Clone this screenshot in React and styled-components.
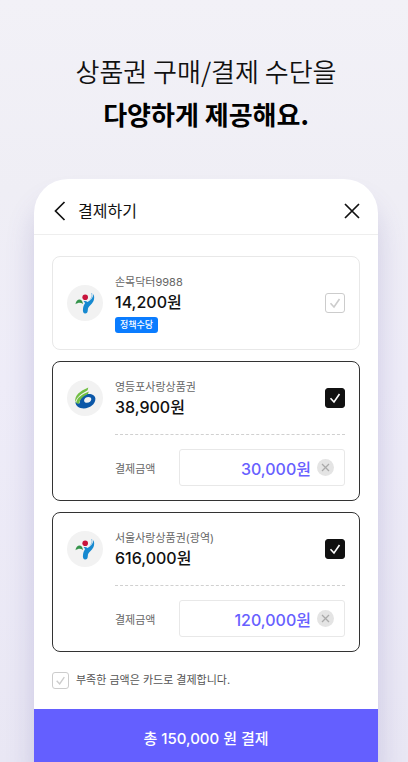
import React, { useState } from 'react';
import styled, { createGlobalStyle } from 'styled-components';

const GlobalStyle = createGlobalStyle`
  * {
    box-sizing: border-box;
  }
  body {
    margin: 0;
    color: #111;
    font-family: Inter, 'Noto Sans CJK KR', sans-serif;
  }
  button,
  input {
    margin: 0;
    padding: 0;
    border: 0;
    background: none;
    color: inherit;
    font-family: inherit;
  }
  button {
    cursor: pointer;
  }
`;

const Page = styled.main`
  display: flex;
  flex-direction: column;
  min-height: 100vh;
  padding: 49px 30px 0 34px;
  background: linear-gradient(#f2f1f7, #efeef5 25%, #eeecf8 50%, #e9e7f4);
`;

const Headline = styled.h1`
  margin: 0 0 44px;
  font-family: 'Noto Sans CJK KR', sans-serif;
  font-size: 26px;
  font-weight: 350;
  line-height: 43px;
  text-align: center;
  strong {
    display: block;
    color: #000;
    font-weight: 700;
  }
`;

const Sheet = styled.section`
  display: flex;
  flex: 1;
  flex-direction: column;
  overflow: hidden;
  border-radius: 34px 34px 0 0;
  background: #fff;
  box-shadow: 0 24px 28px rgba(90, 80, 160, 0.22);
`;

const SheetHeader = styled.header`
  display: flex;
  align-items: center;
  gap: 8px;
  height: 56px;
  padding: 8px 16px 0;
  border-bottom: 1px solid #eee;
  h2 {
    flex: 1;
    margin: 0;
    font-size: 16px;
    font-weight: 400;
    line-height: 24px;
  }
`;

const IconButton = styled.button`
  display: grid;
  place-items: center;
  width: 20px;
  height: 24px;
`;

const List = styled.div`
  display: flex;
  flex: 1;
  flex-direction: column;
  gap: 11px;
  padding: 21px 18px 16px;
`;

const Card = styled.article`
  display: grid;
  grid-template-columns: 36px 1fr 20px;
  column-gap: 12px;
  align-items: center;
  padding: 14px;
  border: 1px solid ${({ $on }) => ($on ? '#333' : '#e8e8e8')};
  border-radius: 8px;
`;

const Emblem = styled.svg`
  width: 36px;
  height: 36px;
`;

const Info = styled.div`
  display: flex;
  flex-direction: column;
  align-items: flex-start;
  padding: 2px 0;
`;

const Name = styled.div`
  color: #666;
  font-size: 11px;
  line-height: 18px;
`;

const Balance = styled.div`
  font-size: 16px;
  font-weight: 500;
  line-height: 22px;
`;

const Badge = styled.span`
  margin-top: 4px;
  padding: 0 5px;
  border-radius: 3px;
  background: #0a7cff;
  color: #fff;
  font-size: 9px;
  font-weight: 500;
  line-height: 16px;
`;

const Payment = styled.div`
  display: grid;
  grid-column: 2 / -1;
  grid-template-columns: 48px minmax(0, 1fr);
  align-items: center;
  gap: 16px;
  margin-top: 14px;
  padding-top: 14px;
  border-top: 1px dashed #d0d0d0;
  label {
    color: #666;
    font-size: 11px;
    white-space: nowrap;
  }
`;

const AmountBox = styled.div`
  display: flex;
  align-items: center;
  gap: 6px;
  height: 37px;
  padding: 0 10px;
  border: 1px solid #e8e8e8;
  border-radius: 3px;
  input {
    flex: 1;
    min-width: 0;
    height: 24px;
    outline: none;
    color: #6760ff;
    font-size: 16px;
    font-weight: 500;
    text-align: right;
  }
`;

const ClearButton = styled.button`
  display: grid;
  place-items: center;
  width: 17px;
  height: 17px;
  border-radius: 50%;
  background: #e4e4e4;
`;

const CheckWrap = styled.span`
  display: grid;
  width: ${({ $size }) => $size}px;
  height: ${({ $size }) => $size}px;
  input,
  svg {
    grid-area: 1 / 1;
    width: 100%;
    height: 100%;
  }
  input {
    appearance: none;
    border: 1px solid #ccc;
    border-radius: 3px;
  }
  input:checked {
    border-color: #111;
    background: #111;
  }
  svg {
    color: #ccc;
    pointer-events: none;
  }
  input:checked + svg {
    color: #fff;
  }
`;

const CardOption = styled.label`
  display: flex;
  align-items: center;
  gap: 7px;
  margin-top: 8px;
  color: #555;
  font-size: 11px;
  line-height: 18px;
`;

const PayButton = styled.button`
  height: 53px;
  padding-top: 4px;
  background: #645fff;
  color: #fff;
  font-size: 15px;
  font-weight: 500;
`;

function Check({ size = 20, ...props }) {
  return (
    <CheckWrap $size={size}>
      <input type="checkbox" {...props} />
      <svg viewBox="0 0 20 20" fill="none" stroke="currentColor" strokeWidth="1.6">
        <path d="M5.5 10.2 9 14l5.5-8" />
      </svg>
    </CheckWrap>
  );
}

function SeoulEmblem() {
  return (
    <Emblem viewBox="0 0 36 36" aria-hidden="true">
      <circle cx="18" cy="18" r="18" fill="#f2f2f2" />
      <circle cx="18.2" cy="12.2" r="2.8" fill="#c8143c" />
      <path d="M8.500 19.200C9 13.800 15.200 12.400 16 19c-2.400-1.800-4.600-1.800-7.500.2Z" fill="#35944b" />
      <path
        d="M26.600 9c1.400 4.600.2 7.800-2.600 10.400-2.200 2-3.200 3.400-3.200 5.600 0 2.400-1 3.600-2.600 3.600-1.800 0-2.600-2-2.200-4.600.2-2.600 1-4.400 2-5.800-.4-1-.8-1.400-1.400-2 1.800-.4 3 0 3.800.8 3-1.600 5.600-3.800 6.200-8Z"
        fill="#1689d0"
      />
      <path d="M24.600 8c1 3 .2 5.600-2.200 7.400" fill="none" stroke="#8cc4e8" strokeWidth="1" />
    </Emblem>
  );
}

function YeongdeungpoEmblem() {
  return (
    <Emblem viewBox="0 0 36 36" aria-hidden="true">
      <circle cx="18" cy="18" r="18" fill="#f2f2f2" />
      <path
        fillRule="evenodd"
        d="M15.500 15.600c5.500-3 12.900-1.800 12.900 3.200 0 5.400-5.400 9.600-11.600 9.600-4.800 0-8.200-2.400-8.400-6.400 1.400 1 2.800 1.400 4.200 1.200.2-3 1-5.600 2.900-7.600Zm6 1.300c-2.600 0-4.400 1.700-4.400 3.500 0 1.500 1.200 2.300 2.800 2.300 2.500 0 4.400-1.700 4.400-3.500 0-1.500-1.200-2.300-2.800-2.300Z"
        fill="#0b57a8"
      />
      <path d="M21.300 7.400C13 11 7.200 15 8.300 22.400c1.400-5.400 5.600-8.400 12.300-12.200Z" fill="#72bf44" />
      <path d="M21.800 11.400C14.800 14.400 9.600 17.600 9.200 23c1 .6 2 .8 3 .6.6-4.400 3.400-6.800 8.800-9.600Z" fill="#72bf44" />
    </Emblem>
  );
}

const vouchers = [
  { id: 'health', name: '손목닥터9988', balance: '14,200원', badge: '정책수당', Logo: SeoulEmblem },
  {
    id: 'ydp',
    name: '영등포사랑상품권',
    balance: '38,900원',
    amount: '30,000원',
    Logo: YeongdeungpoEmblem,
  },
  {
    id: 'seoul',
    name: '서울사랑상품권(광역)',
    balance: '616,000원',
    amount: '120,000원',
    Logo: SeoulEmblem,
  },
];

function VoucherCard({ data }) {
  const { Logo } = data;
  const [on, setOn] = useState(Boolean(data.amount));
  const [amount, setAmount] = useState(data.amount);

  return (
    <Card $on={on}>
      <Logo />
      <Info>
        <Name>{data.name}</Name>
        <Balance>{data.balance}</Balance>
        {data.badge && <Badge>{data.badge}</Badge>}
      </Info>
      <Check checked={on} onChange={() => setOn(!on)} aria-label={data.name} />
      {data.amount && (
        <Payment>
          <label htmlFor={data.id}>결제금액</label>
          <AmountBox>
            <input id={data.id} value={amount} onChange={(e) => setAmount(e.target.value)} />
            <ClearButton aria-label="지우기" onClick={() => setAmount('')}>
              <svg width="9" height="9" viewBox="0 0 9 9" stroke="#aaa" strokeWidth="1.3">
                <path d="m1 1 7 7M8 1 1 8" />
              </svg>
            </ClearButton>
          </AmountBox>
        </Payment>
      )}
    </Card>
  );
}

function App() {
  return (
    <>
      <GlobalStyle />
      <Page>
        <Headline>
          상품권 구매/결제 수단을
          <strong>다양하게 제공해요.</strong>
        </Headline>
        <Sheet>
          <SheetHeader>
            <IconButton aria-label="뒤로">
              <svg width="12" height="20" viewBox="0 0 12 20" fill="none" stroke="#111" strokeWidth="1.7">
                <path d="m10.5 1-9 9 9 9" />
              </svg>
            </IconButton>
            <h2>결제하기</h2>
            <IconButton aria-label="닫기">
              <svg width="16" height="16" viewBox="0 0 16 16" stroke="#111" strokeWidth="1.7">
                <path d="m1 1 14 14M15 1 1 15" />
              </svg>
            </IconButton>
          </SheetHeader>
          <List>
            {vouchers.map((el) => (
              <VoucherCard key={el.id} data={el} />
            ))}
            <CardOption>
              <Check size={17} />
              부족한 금액은 카드로 결제합니다.
            </CardOption>
          </List>
          <PayButton>총 150,000 원 결제</PayButton>
        </Sheet>
      </Page>
    </>
  );
}

export default App;
